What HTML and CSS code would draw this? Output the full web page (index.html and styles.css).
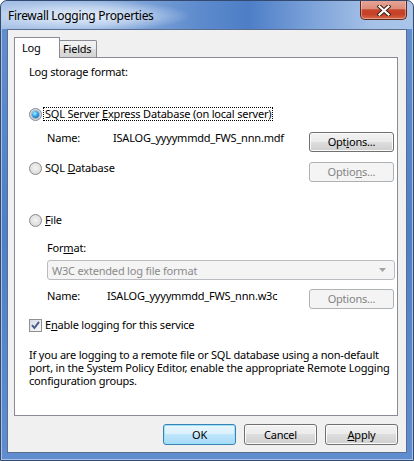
FILE: index.html
```html
<!DOCTYPE html>
<html>
<head>
<meta charset="utf-8">
<title>Firewall Logging Properties</title>
<link rel="stylesheet" href="styles.css">
</head>
<body>
<div class="window">
  <div class="titlebar">
    <span class="title">Firewall Logging Properties</span>
    <div class="close">
      <svg width="14" height="11" viewBox="0 0 14 11">
        <path d="M2.5 1.5 L11.5 9.5 M11.5 1.5 L2.5 9.5" stroke="#3b2018" stroke-width="4.2" stroke-linecap="square" fill="none"/>
        <path d="M2.5 1.5 L11.5 9.5 M11.5 1.5 L2.5 9.5" stroke="#ffffff" stroke-width="2.2" stroke-linecap="square" fill="none"/>
      </svg>
    </div>
  </div>
  <div class="client">
    <div class="tabs">
      <div class="tab active">Log</div>
      <div class="tab">Fields</div>
    </div>
    <div class="panel">
      <div class="heading">Log storage format:</div>

      <div class="row radio-row r1">
        <span class="choice"><span class="radio checked"><span class="dot"></span></span><span class="clabel focus">SQL Server <u>E</u>xpress Database (on local server)</span></span>
      </div>
      <div class="row name-row n1">
        <span class="fname w1">Name:</span><span class="fval">ISALOG_yyyymmdd_FWS_nnn.mdf</span>
        <button class="btn opt o1">Opt<u>i</u>ons...</button>
      </div>

      <div class="row radio-row r2">
        <span class="choice"><span class="radio"></span><span class="clabel">SQL <u>D</u>atabase</span></span>
        <button class="btn opt o2 disabled">Optio<u>n</u>s...</button>
      </div>

      <div class="row radio-row r3">
        <span class="choice"><span class="radio"></span><span class="clabel"><u>F</u>ile</span></span>
      </div>
      <div class="format">For<u>m</u>at:</div>
      <div class="select">
        <span class="seltext">W3C extended log file format</span>
        <svg class="arrow" width="7" height="4" viewBox="0 0 7 4"><path d="M0 0 H7 L3.5 4 Z" fill="#a2a2a2"/></svg>
      </div>
      <div class="row name-row n2">
        <span class="fname w2">Name:</span><span class="fval">ISALOG_yyyymmdd_FWS_nnn.w3c</span>
        <button class="btn opt o3 disabled">Options...</button>
      </div>

      <div class="row check-row">
        <span class="choice"><span class="checkbox"><svg width="11" height="11" viewBox="0 0 11 11"><path d="M2 5.2 L4.4 8 L9 1.8" stroke="#4a5d8a" stroke-width="2" fill="none"/></svg></span><span class="clabel">E<u>n</u>able logging for this service</span></span>
      </div>

      <p class="note">If you are logging to a remote file or SQL database using a non-default<br>port, in the System Policy Editor, enable the appropriate Remote Logging<br>configuration groups.</p>
    </div>
    <div class="buttons">
      <button class="btn bottom default">OK</button>
      <button class="btn bottom">Cancel</button>
      <button class="btn bottom"><u>A</u>pply</button>
    </div>
  </div>
</div>
</body>
</html>
```

FILE: styles.css
```css
* { box-sizing: border-box; }
html, body { margin: 0; padding: 0; background: #ffffff; }
body {
  font-family: "Noto Sans", "Segoe UI", sans-serif;
  font-size: 11px;
  letter-spacing: -0.2px;
  color: #000;
}
u { text-decoration: underline; text-underline-offset: 1px; }

.window {
  width: 414px;
  height: 461px;
  border: 1px solid #34496e;
  border-radius: 7px 7px 0 0;
  padding: 0 6px 7px;
  display: flex;
  flex-direction: column;
  overflow: hidden;
  background: linear-gradient(180deg, #6390d0 0%, #4f7fc6 50%, #5f8dcf 100%);
  box-shadow: inset 0 0 0 1px #a8c1e6;
}

.titlebar {
  height: 28px;
  margin: 0 -6px;
  padding: 0 6px;
  display: flex;
  justify-content: space-between;
  align-items: flex-start;
  border-radius: 6px 6px 0 0;
  background:
    radial-gradient(ellipse 110px 16px at 80px 15px, rgba(236,243,252,0.95) 0%, rgba(220,232,248,0.6) 55%, rgba(200,218,242,0) 100%),
    linear-gradient(90deg, #a9c2e6 0%, #8fb0de 25%, #5e8bcd 48%, #4d7ec6 60%, #7ea4da 76%, #a5c1e7 90%, #aac5e9 100%);
}
.title {
  margin: 7px 0 0 1px;
  line-height: 15px;
  font-size: 12px;
  letter-spacing: -0.3px;
  white-space: nowrap;
}
.close {
  width: 47px;
  height: 20px;
  margin-top: -1px;
  border: 1px solid #5b2a1f;
  border-top: none;
  border-radius: 0 0 5px 5px;
  background: linear-gradient(180deg, #e6a899 0%, #dc8d7b 45%, #c6452c 52%, #c34026 75%, #d9694b 100%);
  box-shadow: inset 0 0 0 1px rgba(255,220,210,0.45);
  display: flex;
  align-items: center;
  justify-content: center;
  padding-top: 1px;
}

.client {
  flex: 1;
  background: #f0f0f0;
  border: 1px solid #5a6e8f;
  padding: 7px 8px 0 6px;
  display: flex;
  flex-direction: column;
}

.tabs {
  display: flex;
  align-items: flex-end;
  height: 20px;
  position: relative;
  z-index: 1;
}
.tab {
  line-height: 15px;
  white-space: nowrap;
}
.tab.active {
  width: 46px;
  height: 21px;
  margin-bottom: -1px;
  border: 1px solid #898c95;
  border-bottom: none;
  background: #ffffff;
  padding: 2px 0 0 7px;
}
.tab:not(.active) {
  width: 37px;
  height: 17px;
  border: 1px solid #898c95;
  border-left: none;
  border-bottom: none;
  border-radius: 0 2px 0 0;
  background: linear-gradient(180deg, #f3f3f3 0%, #ebebeb 50%, #dedede 51%, #d4d4d4 100%);
  padding: 0 0 0 3px;
}

.panel {
  height: 359px;
  width: 384px;
  background: #ffffff;
  border: 1px solid #898c95;
  padding: 0 3px 0 14px;
  display: flex;
  flex-direction: column;
}

.heading {
  margin-top: 6px;
  line-height: 15px;
}

.row {
  display: flex;
  align-items: flex-start;
}
.choice {
  display: inline-flex;
  align-items: center;
  height: 20px;
}
.radio {
  width: 13px;
  height: 13px;
  border-radius: 50%;
  border: 1px solid #8a8a8a;
  background: radial-gradient(circle at 50% 45%, #f4f4f4 0%, #e3e3e3 50%, #cfcfcf 100%);
  margin-right: 1px;
  display: flex;
  align-items: center;
  justify-content: center;
  flex: none;
}
.radio.checked { border-color: #7a8a9c; }
.radio .dot {
  width: 7px;
  height: 7px;
  border-radius: 50%;
  background: radial-gradient(circle at 40% 35%, #b8ecff 0%, #3ab0ec 40%, #1463b0 80%, #124f8f 100%);
  box-shadow: 0 0 0 1px rgba(40,90,140,0.35);
}
.checkbox {
  width: 13px;
  height: 13px;
  border: 1px solid #8f8f8f;
  background: linear-gradient(135deg, #d6dbe4 0%, #eef0f4 60%, #f7f7f7 100%);
  margin-right: 1px;
  display: flex;
  align-items: center;
  justify-content: center;
  flex: none;
}
.clabel {
  line-height: 12px;
  height: 14px;
  border: 1px dotted transparent;
  padding: 0 1px;
  white-space: nowrap;
}
.clabel.focus { border-color: #000; }

.r1 { margin-top: 25px; }
.n1 { margin-top: 6px; }
.r2 { margin-top: 6px; }
.r3 { margin-top: 28px; }

.name-row { padding-left: 18px; line-height: 15px; }
.fname { flex: none; }
.w1 { width: 66px; }
.w2 { width: 60px; }
.fval { white-space: nowrap; }

.btn {
  font-family: inherit;
  font-size: 11px;
  letter-spacing: -0.2px;
  color: #000;
  height: 20px;
  padding: 0;
  border: 1px solid #707070;
  border-radius: 3px;
  background: linear-gradient(180deg, #f2f2f2 0%, #ebebeb 49%, #dddddd 50%, #cfcfcf 100%);
  box-shadow: inset 0 0 0 1px #fbfbfb;
  line-height: 16px;
  flex: none;
}
.btn.disabled {
  border-color: #adb2b5;
  background: #f4f4f4;
  color: #838383;
  box-shadow: none;
}
.opt { width: 85px; margin-left: auto; }
.o1 { margin-top: 2px; }
.o2 { margin-top: 4px; }
.o3 { margin-top: 1px; }

.format {
  margin-top: 10px;
  padding-left: 18px;
  line-height: 15px;
}
.select {
  margin: 5px 0 0 18px;
  width: 348px;
  height: 20px;
  border: 1px solid #b8bcc0;
  border-radius: 3px;
  background: #f4f4f4;
  color: #8a8a8a;
  display: flex;
  align-items: center;
  justify-content: space-between;
  padding: 0 8px 0 4px;
  line-height: 15px;
}
.n2 { margin-top: 8px; }

.check-row { margin-top: 6px; }

.note {
  margin: 13px 0 0;
  line-height: 13px;
  white-space: nowrap;
}

.buttons {
  display: flex;
  justify-content: flex-end;
  gap: 8px;
  margin-top: 8px;
  padding-right: 0;
}
.bottom {
  width: 73px;
  height: 21px;
}
.btn.default {
  border-color: #3c7fb1;
  background: linear-gradient(180deg, #eaf6fd 0%, #d9f0fc 49%, #bee6fd 50%, #a7d9f5 100%);
  box-shadow: inset 0 0 0 1px #9be4fb;
}
```
